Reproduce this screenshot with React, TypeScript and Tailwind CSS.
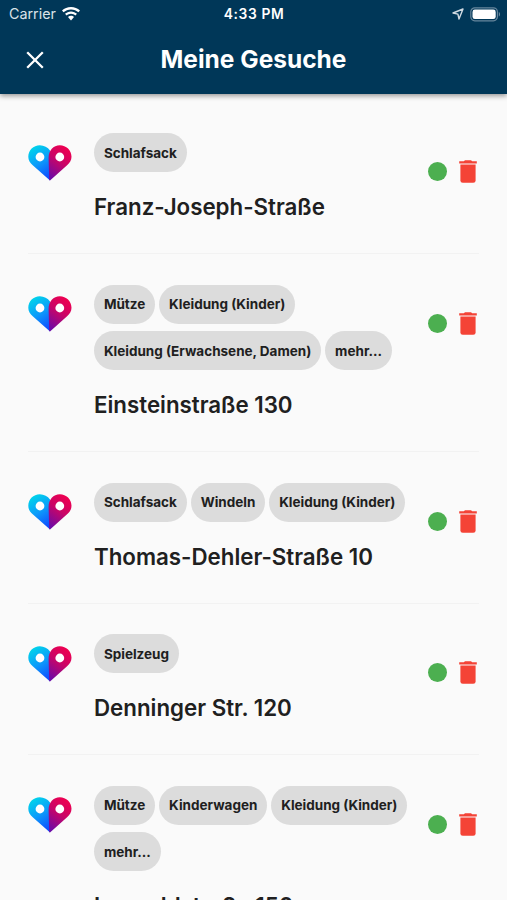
import React from "react";

type Request = {
  tags: string[];
  address: string;
};

const requests: Request[] = [
  { tags: ["Schlafsack"], address: "Franz-Joseph-Straße" },
  {
    tags: ["Mütze", "Kleidung (Kinder)", "Kleidung (Erwachsene, Damen)", "mehr..."],
    address: "Einsteinstraße 130",
  },
  {
    tags: ["Schlafsack", "Windeln", "Kleidung (Kinder)"],
    address: "Thomas-Dehler-Straße 10",
  },
  { tags: ["Spielzeug"], address: "Denninger Str. 120" },
  {
    tags: ["Mütze", "Kinderwagen", "Kleidung (Kinder)", "mehr..."],
    address: "Leopoldstraße 150",
  },
];

// Two map pins leaning together into a heart
const HeartLogo = () => (
  <svg width="44" height="36" viewBox="0 0 44 36" className="block">
    <defs>
      <linearGradient id="pinBlue" x1="0.3" y1="0" x2="0.7" y2="1">
        <stop offset="0" stopColor="#00d5ea" />
        <stop offset="0.5" stopColor="#0c9bfa" />
        <stop offset="1" stopColor="#0f4dff" />
      </linearGradient>
      <linearGradient id="pinRed" x1="0.7" y1="0" x2="0.2" y2="1">
        <stop offset="0" stopColor="#f0004f" />
        <stop offset="0.45" stopColor="#c90567" />
        <stop offset="1" stopColor="#6a0ba8" />
      </linearGradient>
    </defs>
    <path
      d="M22 35.6 L5 20.6 C2 18 0.3 15.4 0.3 11.8 C0.3 5.3 5.4 0.3 11.8 0.3 C16 0.3 19.8 2.4 22 5.6 Z"
      fill="url(#pinBlue)"
    />
    <path
      d="M21.2 34.9 L20.6 13 C20.6 5.5 25.4 0.3 31.8 0.3 C38.3 0.3 43.5 5.3 43.5 11.8 C43.5 15.4 41.8 18 38.8 20.6 L22 35.6 Z"
      fill="url(#pinRed)"
    />
    <circle cx="12" cy="12" r="4.4" fill="#fff" />
    <circle cx="31.8" cy="12" r="4.4" fill="#fff" />
  </svg>
);

const TrashIcon = () => (
  <svg width="18" height="23" viewBox="0 0 18 23" className="block" fill="#f44336">
    <path d="M1.4 4.6h15.2v15.8a2.3 2.3 0 0 1-2.3 2.3H3.7a2.3 2.3 0 0 1-2.3-2.3z" />
    <path d="M0.2 1.3h4.6L6 0.2h6l1.2 1.1h4.6v2.3H0.2z" />
  </svg>
);

const StatusBar = () => (
  <div className="grid h-7 grid-cols-3 items-center pl-[9px] pr-[8px]">
    <div className="flex items-center gap-[6px]">
      <span className="text-[14.3px] text-[#d9e2e8]">Carrier</span>
      <svg width="18" height="14" viewBox="0 0 18 14" fill="#fff">
        <path d="M9 0C5.5 0 2.3 1.4 0 3.6L1.6 5.3C3.5 3.5 6.1 2.4 9 2.4s5.5 1.1 7.4 2.9L18 3.6C15.7 1.4 12.5 0 9 0z" />
        <path d="M9 4.4c-2.3 0-4.4.9-6 2.4l1.6 1.7C5.8 7.4 7.3 6.7 9 6.7s3.2.7 4.4 1.8L15 6.8c-1.6-1.5-3.7-2.4-6-2.4z" />
        <path d="M9 8.7c-1.2 0-2.2.5-3 1.2l3 3.6 3-3.6c-.8-.7-1.8-1.2-3-1.2z" />
      </svg>
    </div>
    <span className="text-center text-[13.8px] font-semibold tracking-[0.6px]">4:33 PM</span>
    <div className="flex items-center justify-end gap-[6px]">
      <svg width="12" height="12" viewBox="0 0 12 12" fill="none" stroke="#cfdae2" strokeWidth="1.4" strokeLinejoin="round">
        <path d="M11 1 7 11 5.9 6.1 1 5z" />
      </svg>
      <svg width="31" height="15" viewBox="0 0 31 15" className="-mr-[2px]">
        <rect x="0.8" y="0.8" width="26.6" height="13" rx="4" fill="none" stroke="#66869c" strokeWidth="1.2" />
        <rect x="2.5" y="2.5" width="23.2" height="9.6" rx="2.4" fill="#fff" />
        <path d="M28.8 5v4.6c1.7-.6 1.7-4 0-4.6z" fill="#66869c" />
      </svg>
    </div>
  </div>
);

const RequestRow = ({ tags, address }: Request) => (
  <li className="mx-7 flex items-center border-b border-[#f2f2f2] pt-[30.5px] pb-[30px]">
    <div className="w-[66px] shrink-0 self-start pt-[11.5px]">
      <HeartLogo />
    </div>
    <div className="w-[324px] shrink-0">
      <div className="flex flex-wrap gap-x-1 gap-y-[7.5px]">
        {tags.map((tag) => (
          <span
            key={tag}
            className="flex h-[39px] items-center rounded-full bg-[#dcdcdc] px-[9.9px] pt-px text-[13.5px] font-bold whitespace-nowrap"
          >
            {tag}
          </span>
        ))}
      </div>
      <h2 className="mt-[19px] h-8 text-[22.3px] leading-8 font-[570] whitespace-nowrap">{address}</h2>
    </div>
    <div className="ml-[10px] flex shrink-0 items-center gap-[12px] self-start pt-[27px]">
      <span className="size-[19px] rounded-full bg-[#4caf50]" />
      <TrashIcon />
    </div>
  </li>
);

const App = () => {
  return (
    <div className="h-[900px] w-full overflow-hidden bg-[#fafafa] font-['Inter',sans-serif] text-[#202020]">
      <header className="relative h-[94px] bg-[#003758] text-white shadow-[0_2px_5px_rgba(0,0,0,0.4)]">
        <StatusBar />
        <div className="grid h-[64px] grid-cols-[1fr_auto_1fr] items-center">
          <svg width="18" height="18" viewBox="0 0 18 18" className="ml-[26px]" stroke="#fff" strokeWidth="2.3">
            <path d="M1.2 1.2 16.8 16.8M16.8 1.2 1.2 16.8" />
          </svg>
          <h1 className="pb-[2px] text-[24.5px] font-bold">Meine Gesuche</h1>
        </div>
      </header>
      <ul className="pt-[8.5px]">
        {requests.map((request) => (
          <RequestRow key={request.address} {...request} />
        ))}
      </ul>
    </div>
  );
};

export default App;
